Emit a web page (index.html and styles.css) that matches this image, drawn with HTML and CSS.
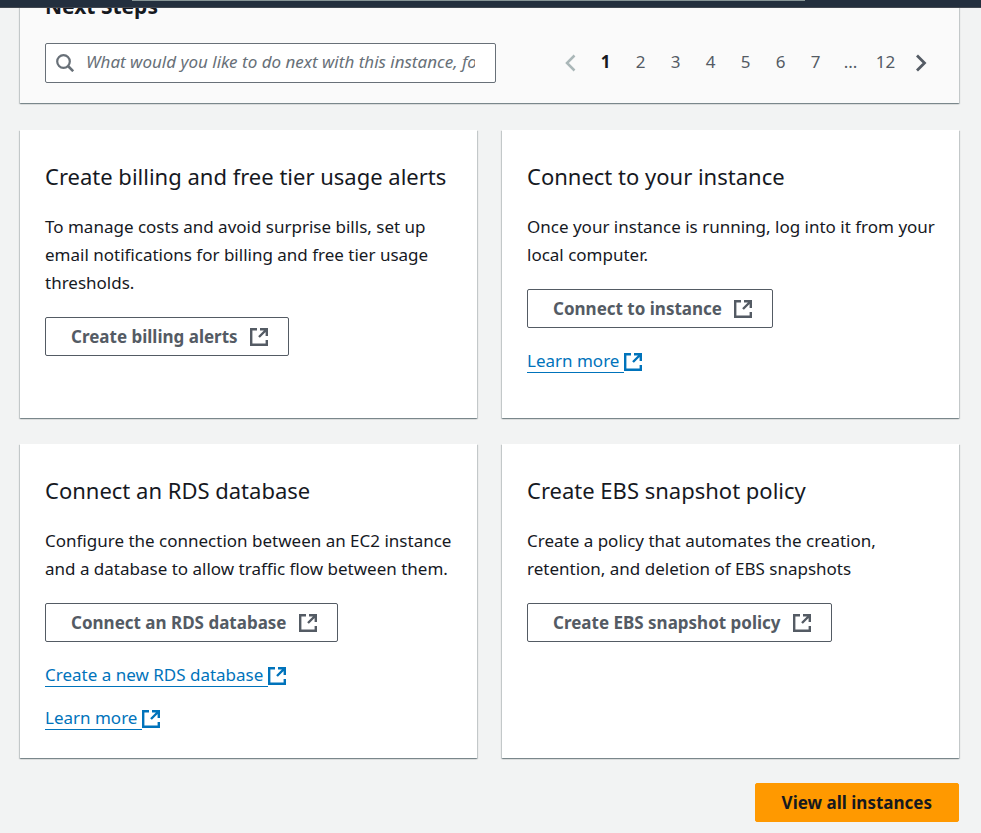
FILE: index.html
```html
<!DOCTYPE html>
<html lang="en">
<head>
<meta charset="utf-8">
<meta name="viewport" content="width=device-width, initial-scale=1">
<title>Next Steps</title>
<link rel="stylesheet" href="styles.css">
</head>
<body>
<svg class="sprite" aria-hidden="true">
  <symbol id="external" viewBox="0 0 18 18">
    <path d="M7 1.200H1.200v15.600h15.600V12M10 1.200h6.800V8M16 2L9 9" fill="none" stroke="currentColor" stroke-width="2.400"/>
  </symbol>
</svg>
<header class="topbar"><div class="topbar-search"></div></header>
<main class="page">
  <section class="panel">
    <h1 class="panel-title">Next Steps</h1>
    <div class="toolbar">
      <label class="search">
        <svg class="search-icon" viewBox="0 0 18 18" aria-hidden="true">
          <circle cx="7.500" cy="7.500" r="6.300" fill="none" stroke="currentColor" stroke-width="2.200"/>
          <path d="M12 12L17.200 17.200" stroke="currentColor" stroke-width="2.600"/>
        </svg>
        <input class="search-input" type="text" aria-label="Find next steps" placeholder="What would you like to do next with this instance, for example">
      </label>
      <nav class="pages" aria-label="Pagination">
        <button class="page-arrow" type="button" disabled aria-label="Previous page"><svg class="chevron" viewBox="0 0 12 18"><path d="M9.500 1.500L2 9L9.500 16.500" fill="none" stroke="currentColor" stroke-width="2.500"/></svg></button>
        <button class="page-number current" type="button" aria-current="page">1</button>
        <button class="page-number" type="button">2</button>
        <button class="page-number" type="button">3</button>
        <button class="page-number" type="button">4</button>
        <button class="page-number" type="button">5</button>
        <button class="page-number" type="button">6</button>
        <button class="page-number" type="button">7</button>
        <span class="page-number">...</span>
        <button class="page-number" type="button">12</button>
        <button class="page-arrow" type="button" aria-label="Next page"><svg class="chevron" viewBox="0 0 12 18"><path d="M2 1.500L9.500 9L2 16.500" fill="none" stroke="currentColor" stroke-width="2.800"/></svg></button>
      </nav>
    </div>
  </section>
  <div class="cards">
    <article class="card">
      <h2 class="card-title">Create billing and free tier usage alerts</h2>
      <p class="card-text">To manage costs and avoid surprise bills, set up email notifications for billing and free tier usage thresholds.</p>
      <button class="button" type="button">Create billing alerts<svg class="external"><use href="#external"/></svg></button>
    </article>
    <article class="card">
      <h2 class="card-title">Connect to your instance</h2>
      <p class="card-text">Once your instance is running, log into it from your local computer.</p>
      <button class="button" type="button">Connect to instance<svg class="external"><use href="#external"/></svg></button>
      <a class="link" href="#"><span class="link-text">Learn more </span><svg class="external"><use href="#external"/></svg></a>
    </article>
    <article class="card">
      <h2 class="card-title">Connect an RDS database</h2>
      <p class="card-text">Configure the connection between an EC2 instance and a database to allow traffic flow between them.</p>
      <button class="button" type="button">Connect an RDS database<svg class="external"><use href="#external"/></svg></button>
      <a class="link" href="#"><span class="link-text">Create a new RDS database </span><svg class="external"><use href="#external"/></svg></a>
      <a class="link" href="#"><span class="link-text">Learn more </span><svg class="external"><use href="#external"/></svg></a>
    </article>
    <article class="card">
      <h2 class="card-title">Create EBS snapshot policy</h2>
      <p class="card-text">Create a policy that automates the creation, retention, and deletion of EBS snapshots</p>
      <button class="button" type="button">Create EBS snapshot policy<svg class="external"><use href="#external"/></svg></button>
    </article>
  </div>
  <div class="actions"><button class="button primary" type="button">View all instances</button></div>
</main>
</body>
</html>
```
FILE: styles.css
```css
* { box-sizing: border-box; }
body {
  margin: 0;
  overflow: hidden;
  background: #f2f3f3;
  color: #16191f;
  font-family: "Noto Sans", "Open Sans", sans-serif;
  font-size: 17px;
  line-height: 28px;
}
h1, h2, p { margin: 0; }
button, input { font: inherit; color: inherit; }
.sprite { position: absolute; width: 0; height: 0; }
.topbar {
  position: fixed;
  inset: 0 0 auto;
  z-index: 1;
  height: 8px;
  padding: 0 176px 0 132px;
  background: #232f3e;
  border-bottom: 1px solid #414750;
}
.topbar-search { height: 1px; background: #879596; }
.page { padding: 0 22px 0 20px; }
.panel, .card {
  background: #fff;
  box-shadow: 0 1px 1px 0 rgba(0, 28, 36, .3), 1px 1px 1px 0 rgba(0, 28, 36, .15), -1px 1px 1px 0 rgba(0, 28, 36, .15);
}
.panel { margin-top: -8px; padding: 0 21px 20px 25px; background: #fafafa; }
.panel-title { padding-bottom: 22px; font-size: 21px; line-height: 29px; }
.toolbar { display: flex; align-items: center; justify-content: space-between; gap: 57px; }
.search {
  flex: 1;
  min-width: 0;
  height: 40px;
  display: flex;
  align-items: center;
  gap: 12px;
  padding: 0 20px 0 10px;
  background: #fff;
  border: 1px solid #687078;
  border-radius: 2px;
  color: #687078;
}
.search-icon { flex: none; width: 18px; height: 18px; }
.search-input { flex: 1; min-width: 0; padding: 0 0 2px; border: 0; outline: 0; background: none; }
.search-input::placeholder { color: #687078; opacity: 1; font-style: italic; }
.pages { display: flex; align-items: center; color: #545b64; }
.page-number { width: 35px; padding: 0 0 2px; border: 0; background: none; text-align: center; }
.current { color: #16191f; font-weight: 700; }
.page-arrow { width: 35px; height: 28px; display: flex; align-items: center; justify-content: center; padding: 0; border: 0; background: none; }
.page-arrow:disabled { color: #aab7b8; }
.chevron { width: 12px; height: 18px; }
.cards {
  display: grid;
  grid-template-columns: repeat(2, minmax(0, 1fr));
  gap: 26px 25px;
  margin: 27px 0 25px;
}
.card {
  min-height: 288px;
  display: flex;
  flex-direction: column;
  align-items: flex-start;
  padding: 32px 20px 28px 25px;
}
.card-title { margin-bottom: 23px; font-size: 22px; font-weight: 400; line-height: 28px; }
.card-text { margin-bottom: 20px; }
.button {
  height: 39px;
  display: flex;
  align-items: center;
  gap: 12px;
  padding: 0 20px 0 25px;
  background: #fff;
  border: 1px solid #545b64;
  border-radius: 2px;
  color: #545b64;
  font-weight: 700;
}
.external { flex: none; width: 18px; height: 18px; }
.link { display: flex; align-items: center; margin-top: 20px; color: #0073bb; text-decoration: none; line-height: 22px; }
.button + .link { margin-top: 22px; }
.link-text { border-bottom: 1px solid; white-space: pre; }
.actions { display: flex; justify-content: flex-end; }
.primary { padding: 0 26px; background: #f90; border-color: #f90; color: #16191f; }
```
